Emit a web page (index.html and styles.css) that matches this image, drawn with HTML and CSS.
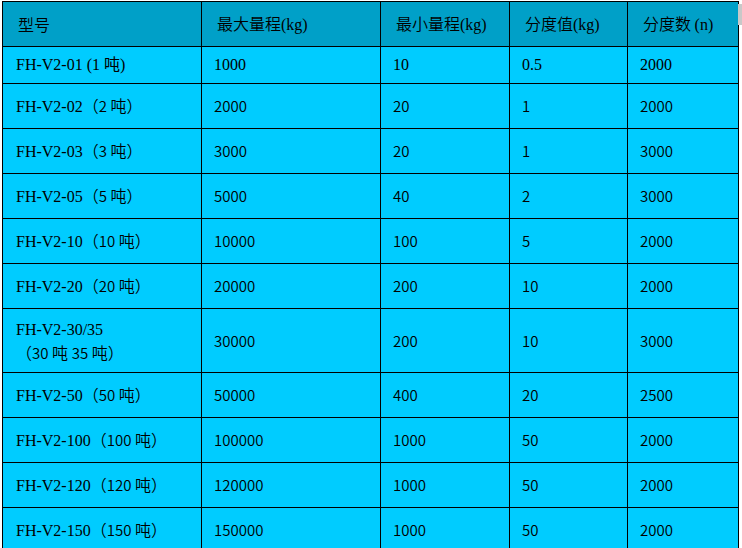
FILE: index.html
```html
<!DOCTYPE html>
<html lang="zh">
<head>
<meta charset="utf-8">
<title>规格表</title>
<link rel="stylesheet" href="styles.css">
</head>
<body>
<table class="spec">
  <colgroup>
    <col class="c1"><col class="c2"><col class="c3"><col class="c4"><col class="c5">
  </colgroup>
  <thead>
    <tr class="head">
      <th>型号</th>
      <th>最大量程<span class="tm">(kg)</span></th>
      <th>最小量程<span class="tm">(kg)</span></th>
      <th>分度值<span class="tm">(kg)</span></th>
      <th>分度数 <span class="tm">(n)</span></th>
    </tr>
  </thead>
  <tbody>
    <tr class="r1">
      <td>FH-V2-01 (1 吨)</td><td>1000</td><td>10</td><td>0.5</td><td>2000</td>
    </tr>
    <tr class="row">
      <td><span class="tm">FH-V2-02</span>（<span class="n">2</span> 吨）</td><td>2000</td><td>20</td><td>1</td><td>2000</td>
    </tr>
    <tr class="row">
      <td><span class="tm">FH-V2-03</span>（<span class="n">3</span> 吨）</td><td>3000</td><td>20</td><td>1</td><td>3000</td>
    </tr>
    <tr class="row">
      <td><span class="tm">FH-V2-05</span>（<span class="n">5</span> 吨）</td><td>5000</td><td>40</td><td>2</td><td>3000</td>
    </tr>
    <tr class="row">
      <td><span class="tm">FH-V2-10</span>（<span class="n">10</span> 吨）</td><td>10000</td><td>100</td><td>5</td><td>2000</td>
    </tr>
    <tr class="row">
      <td><span class="tm">FH-V2-20</span>（<span class="n">20</span> 吨）</td><td>20000</td><td>200</td><td>10</td><td>2000</td>
    </tr>
    <tr class="tall">
      <td class="two"><span class="tm">FH-V2-30/35</span><br>（<span class="n">30</span> 吨 <span class="n">35</span> 吨）</td><td>30000</td><td>200</td><td>10</td><td>3000</td>
    </tr>
    <tr class="row">
      <td><span class="tm">FH-V2-50</span>（<span class="n">50</span> 吨）</td><td>50000</td><td>400</td><td>20</td><td>2500</td>
    </tr>
    <tr class="row">
      <td><span class="tm">FH-V2-100</span>（<span class="n">100</span> 吨）</td><td>100000</td><td>1000</td><td>50</td><td>2000</td>
    </tr>
    <tr class="row">
      <td><span class="tm">FH-V2-120</span>（<span class="n">120</span> 吨）</td><td>120000</td><td>1000</td><td>50</td><td>2000</td>
    </tr>
    <tr class="row">
      <td><span class="tm">FH-V2-150</span>（<span class="n">150</span> 吨）</td><td>150000</td><td>1000</td><td>50</td><td>2000</td>
    </tr>
  </tbody>
</table>
<div class="scrollbit"></div>
</body>
</html>
```
FILE: styles.css
```css
html, body {
  margin: 0;
  padding: 0;
  background: #ffffff;
}
body {
  padding: 1px 0 0 2px;
  font-family: "Noto Sans CJK SC", sans-serif;
  font-weight: 350;
  font-size: 16px;
  color: #000;
}
.spec {
  border-collapse: collapse;
  table-layout: fixed;
  width: 737px;
}
.c1 { width: 199px; }
.c2 { width: 179px; }
.c3 { width: 129px; }
.c4 { width: 118px; }
.c5 { width: 111px; }
.spec th,
.spec td {
  border: 1px solid #000;
  text-align: left;
  vertical-align: middle;
  line-height: 20px;
  white-space: nowrap;
  overflow: hidden;
}
.spec th {
  background: #00a0c8;
  font-weight: 350;
  font-size: 16px;
  padding: 0 6px 0 15px;
}
.spec td {
  background: #00ccff;
  font-size: 15px;
  padding: 0 6px 0 12px;
}
.spec td:first-child {
  font-size: 16px;
  padding-left: 13px;
}
.n {
  font-size: 15px;
}
.head { height: 45px; }
.row { height: 45px; }
.tall { height: 64px; }
.r1 { height: 37px; }
.r1 td,
.tm {
  font-family: "Liberation Serif", "Noto Sans CJK SC", serif;
  font-weight: 400;
}
.r1 td {
  font-size: 16px;
}
.two {
  line-height: 23px !important;
}
.scrollbit {
  position: absolute;
  top: 4px;
  left: 738px;
  width: 4px;
  height: 21px;
  background: #c8c8c8;
}
```
